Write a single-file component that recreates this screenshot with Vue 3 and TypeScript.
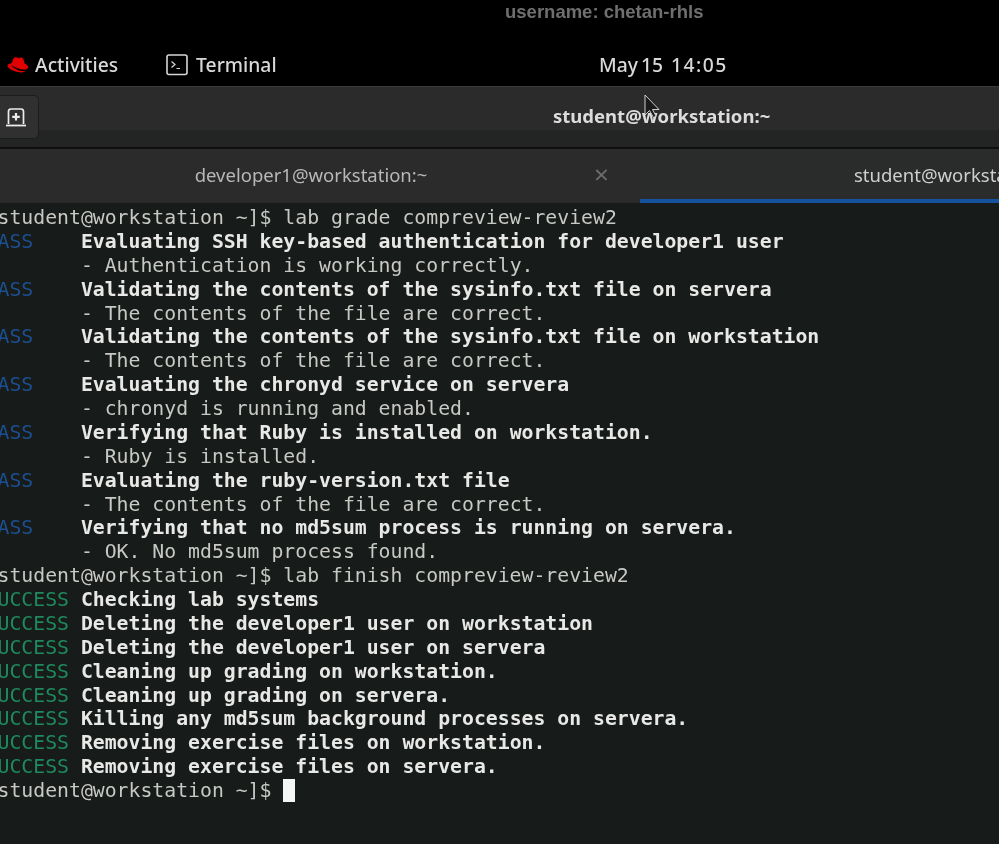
<script setup lang="ts">
type Line = { tag?: string; tagKind?: 'pass' | 'ok'; text: string; bold?: boolean; cursor?: boolean }

const pass = (text: string): Line => ({ tag: 'PASS    ', tagKind: 'pass', text, bold: true })
const ok = (text: string): Line => ({ tag: 'SUCCESS ', tagKind: 'ok', text, bold: true })
const note = (text: string): Line => ({ tag: '        ', text })

const lines: Line[] = [
  { text: '[student@workstation ~]$ lab grade compreview-review2' },
  pass('Evaluating SSH key-based authentication for developer1 user'),
  note('- Authentication is working correctly.'),
  pass('Validating the contents of the sysinfo.txt file on servera'),
  note('- The contents of the file are correct.'),
  pass('Validating the contents of the sysinfo.txt file on workstation'),
  note('- The contents of the file are correct.'),
  pass('Evaluating the chronyd service on servera'),
  note('- chronyd is running and enabled.'),
  pass('Verifying that Ruby is installed on workstation.'),
  note('- Ruby is installed.'),
  pass('Evaluating the ruby-version.txt file'),
  note('- The contents of the file are correct.'),
  pass('Verifying that no md5sum process is running on servera.'),
  note('- OK. No md5sum process found.'),
  { text: '[student@workstation ~]$ lab finish compreview-review2' },
  ok('Checking lab systems'),
  ok('Deleting the developer1 user on workstation'),
  ok('Deleting the developer1 user on servera'),
  ok('Cleaning up grading on workstation.'),
  ok('Cleaning up grading on servera.'),
  ok('Killing any md5sum background processes on servera.'),
  ok('Removing exercise files on workstation.'),
  ok('Removing exercise files on servera.'),
  { text: '[student@workstation ~]$ ', cursor: true },
]
</script>

<template>
  <div class="screen">
    <div class="caption">username: chetan-rhls</div>

    <header class="topbar">
      <div class="activities">
        <svg class="hat" width="22" height="18" viewBox="0 0 22 18">
          <path fill="#e00000" d="M6 3.200C7 1.400 8.600 1 10 1.600c1.200.4 2.200.4 3.400 0 1.400-.4 2.600.4 3.200 2.200l1.200 4c1.600.7 3.400 1.800 3.400 3.200 0 1.600-2 2.600-4.200 2.600-4.200 0-8.600-2.200-11.800-4-1-.5-1.600-1-1.400-1.700C4 7.200 5 6.600 5.200 6Z" />
          <path fill="#e00000" d="M3.600 7.600C1.700 7.800.5 8.500.5 9.700c0 2 4.300 5 10.300 6.300 4 .9 7.700.2 8.400-1.400-1 .5-2.400.7-4 .5C10.500 14.600 4.800 11.500 3.600 7.600Z" />
        </svg>
        <span>Activities</span>
      </div>
      <div class="app">
        <svg width="22" height="22" viewBox="0 0 22 22" fill="none">
          <rect x="1" y="1" width="20" height="19.500" rx="2" stroke="#d6d6d6" stroke-width="1.600" />
          <path d="M5.500 7.500 9 10.500l-3.500 3M10.500 14.500h3.500" stroke="#d6d6d6" stroke-width="1.200" />
        </svg>
        <span>Terminal</span>
      </div>
      <div class="clock"><span class="month">May</span><span class="day">15</span><span class="time">14:05</span></div>
    </header>

    <section class="titlebar">
      <div class="title-main">
        <button class="newtab" type="button" aria-label="New tab">
          <svg width="22" height="22" viewBox="0 0 22 22" fill="none">
            <path d="M3.500 18V5.500Q3.500 3 6 3h10q2.500 0 2.500 2.500V18" stroke="#ececec" stroke-width="1.700" />
            <path d="M1 19.500h20" stroke="#ececec" stroke-width="1.800" />
            <path d="M11 7v7.500M7.200 10.800h7.600" stroke="#ececec" stroke-width="2.200" />
          </svg>
        </button>
        <div class="title">student@workstation:~</div>
      </div>
    </section>

    <nav class="tabs">
      <div class="tab">
        <span class="tab-label">developer1@workstation:~</span>
        <span class="close">×</span>
      </div>
      <div class="tab active">
        <span class="tab-label">student@workstation:~</span>
      </div>
    </nav>

    <main class="term">
      <div v-for="(l, i) in lines" :key="i" class="line">
        <span v-if="l.tag" :class="l.tagKind">{{ l.tag }}</span><span :class="{ bold: l.bold }">{{ l.text }}</span><span v-if="l.cursor" class="cursor"> </span>
      </div>
    </main>

    <svg class="pointer" width="18" height="26" viewBox="0 0 18 26">
      <path d="M1 1v20l4.500-4.500 4 7 2.500-1.500-3.500-6.500h6.500Z" fill="#1a1a1a" stroke="#cfcfcf" stroke-width="1" />
    </svg>
    <span class="speck"></span>
  </div>
</template>

<style>
html, body { margin: 0; background: #000; }
</style>

<style scoped>
.screen {
  position: relative;
  width: 999px;
  height: 844px;
  overflow: hidden;
  background: #171b19;
  display: flex;
  flex-direction: column;
  font-family: "Noto Sans", sans-serif;
  filter: blur(0.45px);
}
.caption {
  height: 24px;
  padding-left: 505px;
  background: #000;
  color: #6f6f6f;
  font: bold 18.500px/24px "Liberation Sans", sans-serif;
}
.topbar {
  height: 62px;
  background: #000;
  display: flex;
  align-items: center;
  padding-top: 19px;
  box-sizing: border-box;
  color: #d8d8d8;
  font-size: 19.300px;
  font-weight: 500;
  position: relative;
}
.activities { display: flex; align-items: center; gap: 6px; margin-left: 7px; }
.app { display: flex; align-items: center; gap: 8px; margin-left: 48px; }
.clock {
  position: absolute;
  left: 599px;
  top: 0;
  display: flex;
  line-height: 81px;
  white-space: pre;
}
.month { margin-right: 3px; }
.time { margin-left: 8px; letter-spacing: 1.500px; }
.titlebar {
  height: 63px;
  border-top: 1px solid #3a3a3a;
  box-sizing: border-box;
  background: #222524;
  border-bottom: 2px solid #0f0f0f;
}
.title-main {
  height: 43px;
  background: #2b2b2b;
  position: relative;
}
.newtab {
  position: absolute;
  left: -10px;
  top: 8px;
  width: 49px;
  height: 44px;
  padding: 0 0 0 14px;
  background: #303030;
  border: 1px solid #1c1c1c;
  border-radius: 5px;
  display: flex;
  align-items: center;
  box-sizing: border-box;
}
.title {
  position: absolute;
  left: 553px;
  top: 0;
  color: #dcdcdc;
  font-size: 18.500px;
  font-weight: 700;
  line-height: 58px;
  white-space: nowrap;
}
.tabs {
  height: 54px;
  display: flex;
  background: #2b2b2b;
  color: #b8b8b8;
  font-size: 18.500px;
  overflow: hidden;
  box-sizing: border-box;
}
.tab {
  position: relative;
  width: 640px;
  flex: none;
  text-align: center;
  line-height: 52px;
}
.tab-label { white-space: nowrap; }
.tab:first-child .tab-label { position: relative; left: -9px; }
.close {
  position: absolute;
  left: 594px;
  top: -2px;
  color: #6d6d6d;
  font-size: 26px;
  line-height: 54px;
}
.tab.active {
  flex: 1 0 640px;
  background: #292c2b;
  border-bottom: 4px solid #15539e;
  box-sizing: border-box;
  color: #cfcfcf;
  text-align: left;
  padding-left: 214px;
}
.term {
  flex: 1;
  margin-left: -14.400px;
  padding-top: 3px;
  font-family: "DejaVu Sans Mono", monospace;
  font-size: 19.800px;
  line-height: 23.880px;
  color: #c8c8c4;
  white-space: pre;
}
.line { height: 23.880px; }
.bold { font-weight: 700; color: #e8e8e6; }
.pass { color: #1c4f8f; }
.ok { color: #1e8a5e; }
.cursor {
  display: inline-block;
  width: 12px;
  height: 23px;
  background: #f4f6f3;
  vertical-align: -5px;
}
.pointer { position: absolute; left: 644px; top: 94px; }
.speck {
  position: absolute;
  left: 177px;
  top: 288px;
  width: 3px;
  height: 3px;
  border-radius: 50%;
  background: #555;
}
</style>
